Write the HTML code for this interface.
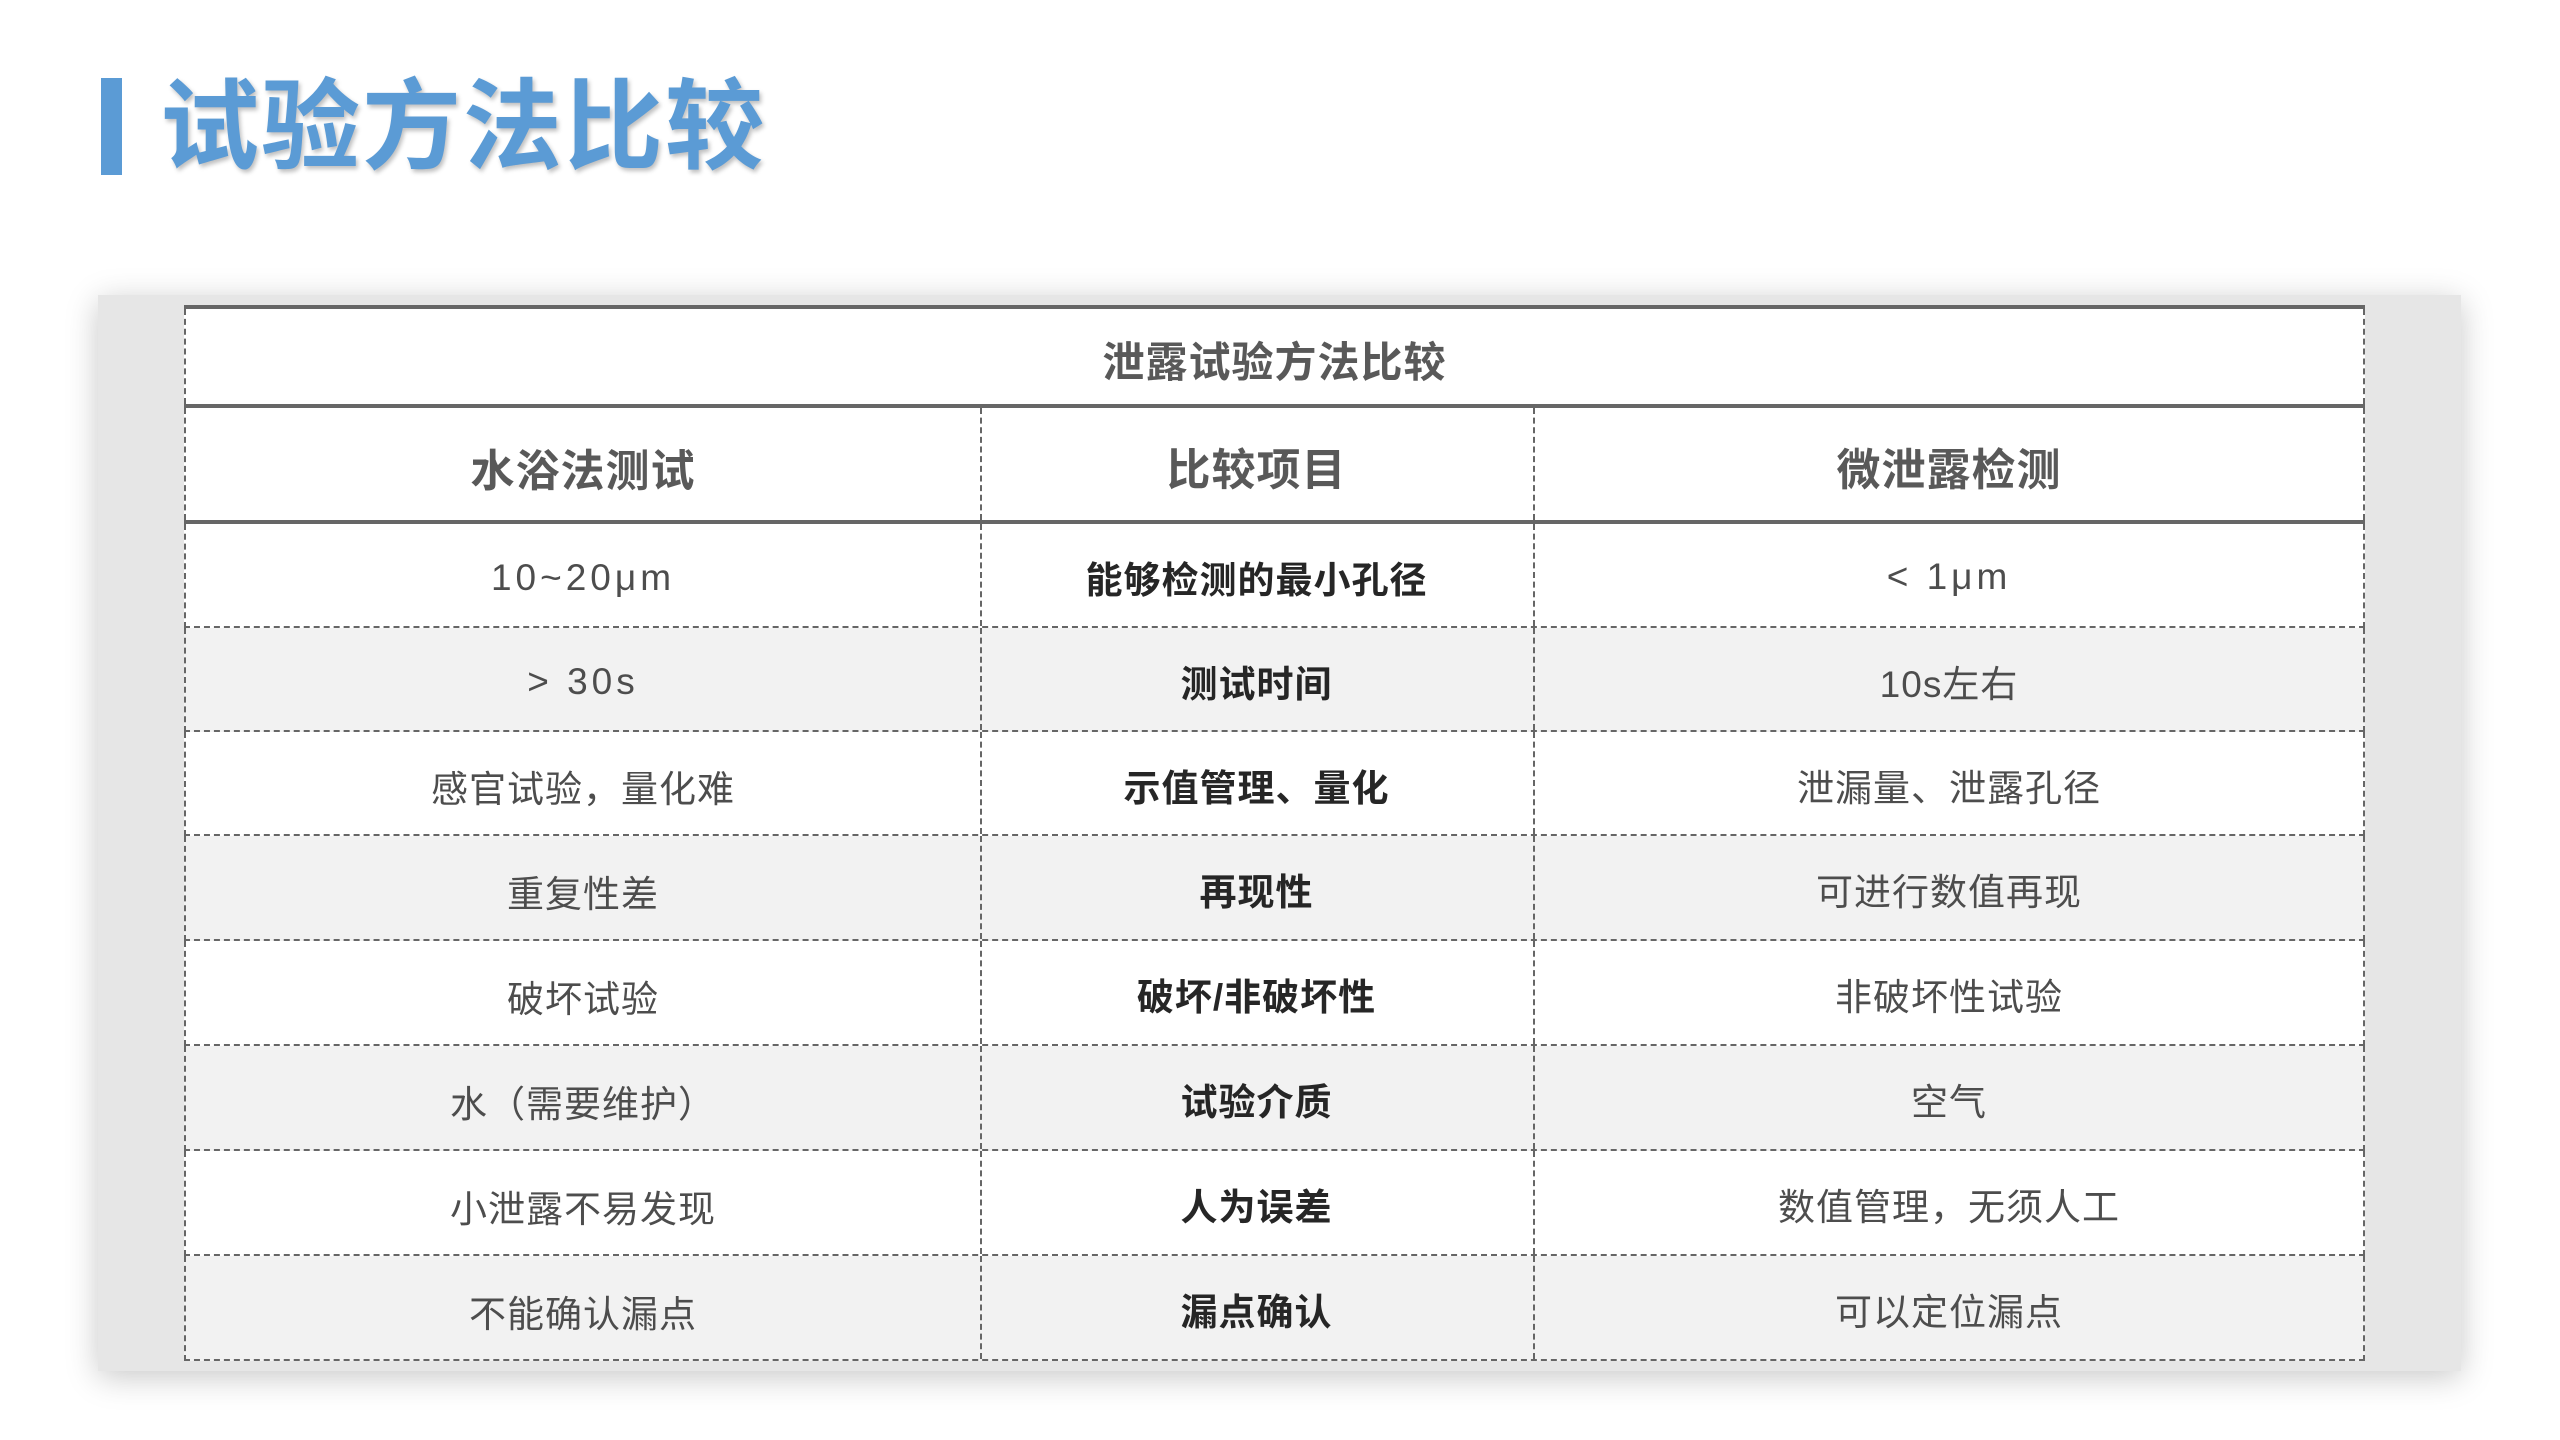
<!DOCTYPE html>
<html><head><meta charset="utf-8"><style>
html,body{margin:0;padding:0;background:#fff;}
body{width:2560px;height:1440px;position:relative;overflow:hidden;font-family:"Liberation Sans","Noto Sans CJK SC",sans-serif;}
.bar{position:absolute;left:101px;top:78px;width:21px;height:97px;background:#5b9bd5;}
.title{position:absolute;left:160px;top:63px;font-size:99px;font-weight:bold;color:#5b9bd5;line-height:128px;letter-spacing:2px;text-shadow:2px 3px 4px rgba(0,0,0,0.25);}
.panel{position:absolute;left:98px;top:295px;width:2363px;height:1076px;background:#e6e6e6;box-shadow:0 6px 30px rgba(0,0,0,0.22);}
.tbl{position:absolute;left:184px;top:305px;width:2181px;height:1053px;}
.thick{position:absolute;left:0;width:2181px;height:4px;background:#666;}
.row{position:absolute;left:0;width:2177px;border-left:2px dashed #666;border-right:2px dashed #666;}
.cell{position:absolute;top:3px;height:100%;display:flex;align-items:center;justify-content:center;color:#4d4d4d;font-size:37px;letter-spacing:1px;}
.c1{left:0;width:794px;}
.c2{left:794px;width:551px;border-left:2px dashed #666;font-weight:bold;color:#262626;top:0;padding-top:3px;box-sizing:border-box;}
.c3{left:1347px;width:830px;border-left:2px dashed #666;top:0;padding-top:3px;box-sizing:border-box;}
.hd .cell{font-size:44px;font-weight:bold;color:#595959;}
.dr{border-bottom:2px dashed #666;}
.g{background:#f2f2f2;}
</style></head><body>
<div class="bar"></div>
<div class="title">试验方法比较</div>
<div class="panel"></div>
<div class="tbl">
  <div class="thick" style="top:0"></div>
  <div class="row" style="top:4px;height:95px;background:#fff;"><div class="cell" style="left:0;width:2177px;font-size:42px;font-weight:bold;color:#595959;">泄露试验方法比较</div></div>
  <div class="thick" style="top:99px"></div>
  <div class="row hd" style="top:103px;height:112px;background:#fff;">
    <div class="cell c1">水浴法测试</div><div class="cell c2">比较项目</div><div class="cell c3">微泄露检测</div></div>
  <div class="thick" style="top:215px"></div>
  <div class="row dr" style="top:219px;height:102px;background:#fff;"><div class="cell c1" style="letter-spacing:4px">10~20μm</div><div class="cell c2">能够检测的最小孔径</div><div class="cell c3" style="letter-spacing:4px">&lt; 1μm</div></div>
  <div class="row dr g" style="top:323px;height:102px;"><div class="cell c1" style="letter-spacing:4px">&gt; 30s</div><div class="cell c2">测试时间</div><div class="cell c3">10s左右</div></div>
  <div class="row dr" style="top:427px;height:102px;background:#fff;"><div class="cell c1">感官试验，量化难</div><div class="cell c2">示值管理、量化</div><div class="cell c3">泄漏量、泄露孔径</div></div>
  <div class="row dr g" style="top:531px;height:103px;"><div class="cell c1">重复性差</div><div class="cell c2">再现性</div><div class="cell c3">可进行数值再现</div></div>
  <div class="row dr" style="top:636px;height:103px;background:#fff;"><div class="cell c1">破坏试验</div><div class="cell c2">破坏/非破坏性</div><div class="cell c3">非破坏性试验</div></div>
  <div class="row dr g" style="top:741px;height:103px;"><div class="cell c1">水（需要维护）</div><div class="cell c2">试验介质</div><div class="cell c3">空气</div></div>
  <div class="row dr" style="top:846px;height:103px;background:#fff;"><div class="cell c1">小泄露不易发现</div><div class="cell c2">人为误差</div><div class="cell c3">数值管理，无须人工</div></div>
  <div class="row dr g" style="top:951px;height:103px;"><div class="cell c1">不能确认漏点</div><div class="cell c2">漏点确认</div><div class="cell c3">可以定位漏点</div></div>
</div>
</body></html>
